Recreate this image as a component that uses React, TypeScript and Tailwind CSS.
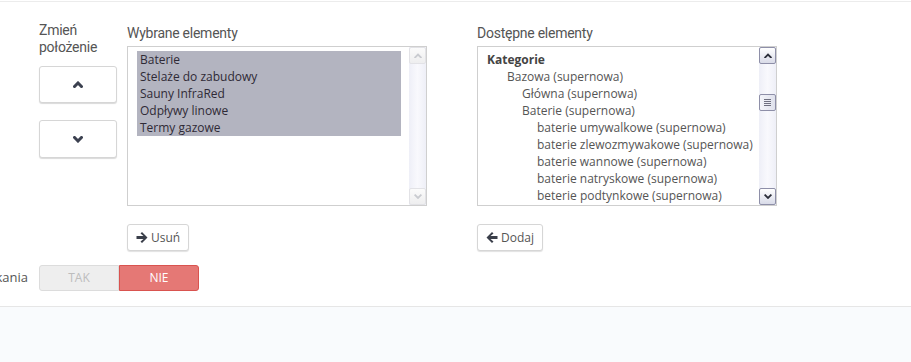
import React from "react";

const condensed = {
  fontFamily: 'Roboto, "Noto Sans", sans-serif',
  letterSpacing: "-0.25px",
};

const Chevron = ({ dir, color, size = 10, width = 3 }: { dir: "up" | "down"; color: string; size?: number; width?: number }) => (
  <svg width={size} height={size * 0.7} viewBox="0 0 10 7">
    <polyline
      points={dir === "up" ? "1.5,5.5 5,2 8.5,5.5" : "1.5,1.5 5,5 8.5,1.5"}
      fill="none"
      stroke={color}
      strokeWidth={width}
      strokeLinecap="square"
    />
  </svg>
);

const ArrowIcon = ({ dir }: { dir: "left" | "right" }) => (
  <svg width="12" height="11" viewBox="0 0 12 11" className={dir === "left" ? "-scale-x-100" : ""}>
    <path d="M0.5 4h7l-3-2.5 1.5-1.5 5.5 5.5-5.5 5.5-1.5-1.5 3-2.5h-7z" fill="#3a3f4a" />
  </svg>
);

const ScrollButton = ({ dir, enabled }: { dir: "up" | "down"; enabled: boolean }) => (
  <div
    className={
      "h-[17px] w-[17px] rounded-[2px] border flex items-center justify-center " +
      (enabled
        ? "border-[#8e8fa8] bg-gradient-to-b from-[#ffffff] to-[#d9dbe8]"
        : "border-[#e2e2e6] bg-gradient-to-b from-[#fbfbfb] to-[#eeeeef]")
    }
  >
    <Chevron dir={dir} color={enabled ? "#2c2f3a" : "#c9cbd0"} size={8} width={2.2} />
  </div>
);

const Scrollbar = ({ enabled }: { enabled: boolean }) => (
  <div className="w-[17px] flex flex-col bg-gradient-to-r from-[#eeeff7] via-[#f9f9fd] to-[#eeeff7]">
    <ScrollButton dir="up" enabled={enabled} />
    <div className="flex-1 flex flex-col">
      {enabled && (
        <div className="mt-[30px] h-[17px] w-[17px] rounded-[2px] border border-[#8e8fa8] bg-gradient-to-r from-[#f4f5fa] to-[#dfe1ec] flex flex-col items-center justify-center gap-[1px]">
          <div className="h-px w-[7px] bg-[#6f7080]" />
          <div className="h-px w-[7px] bg-[#6f7080]" />
          <div className="h-px w-[7px] bg-[#6f7080]" />
          <div className="h-px w-[7px] bg-[#6f7080]" />
        </div>
      )}
    </div>
    <ScrollButton dir="down" enabled={enabled} />
  </div>
);

const selected = ["Baterie", "Stelaże do zabudowy", "Sauny InfraRed", "Odpływy linowe", "Termy gazowe"];

const available: [string, number, boolean?][] = [
  ["Kategorie", 0, true],
  ["Bazowa (supernowa)", 20],
  ["Główna (supernowa)", 35],
  ["Baterie (supernowa)", 35],
  ["baterie umywalkowe (supernowa)", 50],
  ["baterie zlewozmywakowe (supernowa)", 50],
  ["baterie wannowe (supernowa)", 50],
  ["baterie natryskowe (supernowa)", 50],
  ["beterie podtynkowe (supernowa)", 50],
];

const ActionButton = ({ dir, label }: { dir: "left" | "right"; label: string }) => (
  <button className="h-[27px] px-[8px] flex items-center gap-[3px] rounded-[3px] border border-[#d6d6d6] bg-white text-[12px] text-[#555] shadow-[0_1px_1px_rgba(0,0,0,0.12)]">
    <ArrowIcon dir={dir} />
    {label}
  </button>
);

export default function App() {
  return (
    <div
      className="h-screen flex flex-col bg-white text-[12px] text-[#555]"
      style={{ fontFamily: '"Open Sans", "Noto Sans", sans-serif' }}
    >
      <div className="mt-px border-t border-[#ececec]" />
      <div className="flex pl-[39px] pt-[21px] gap-[10px]">
        <div className="w-[78px] flex flex-col">
          <div className="-mt-px text-[14px] leading-[17px] text-[#555]" style={condensed}>
            Zmień
            <br />
            położenie
          </div>
          <button className="mt-[10px] h-[37px] w-[78px] flex items-center justify-center rounded-[3px] border border-[#d6d6d6] bg-white shadow-[0_1px_1px_rgba(0,0,0,0.15)]">
            <Chevron dir="up" color="#3c4150" />
          </button>
          <button className="mt-[17px] h-[38px] w-[78px] flex items-center justify-center rounded-[3px] border border-[#d6d6d6] bg-white shadow-[0_1px_1px_rgba(0,0,0,0.15)]">
            <Chevron dir="down" color="#3c4150" />
          </button>
        </div>

        <div className="w-[300px] flex flex-col">
          <div className="pt-[2px] h-[23px] text-[14px] leading-[16px]" style={condensed}>
            Wybrane elementy
          </div>
          <div className="h-[160px] border border-[#cfcfcf] flex overflow-hidden">
            <div className="flex-1 pt-[4px] pl-[9px] pr-[8px]">
              <div className="bg-[#b3b4c0]">
                {selected.map((s) => (
                  <div key={s} className="h-[17px] leading-[17px] pl-[3px] text-[#2f2a36]">
                    {s}
                  </div>
                ))}
              </div>
            </div>
            <Scrollbar enabled={false} />
          </div>
          <div className="mt-[18px]">
            <ActionButton dir="right" label="Usuń" />
          </div>
        </div>

        <div className="ml-[40px] w-[300px] flex flex-col">
          <div className="pt-[2px] h-[23px] text-[14px] leading-[16px]" style={condensed}>
            Dostępne elementy
          </div>
          <div className="h-[160px] border border-[#cfcfcf] flex overflow-hidden">
            <div className="flex-1 pt-[4px] pl-[9px] overflow-hidden">
              {available.map(([t, indent, bold]) => (
                <div
                  key={t}
                  className={"h-[17px] leading-[17px] whitespace-nowrap " + (bold ? "font-bold text-[#444]" : "text-[#555]")}
                  style={{ paddingLeft: indent }}
                >
                  {t}
                </div>
              ))}
            </div>
            <Scrollbar enabled={true} />
          </div>
          <div className="mt-[18px]">
            <ActionButton dir="left" label="Dodaj" />
          </div>
        </div>
      </div>

      <div className="mt-[14px] flex items-center gap-[11px]">
        <div className="w-[28px] overflow-hidden flex justify-end">
          <span className="whitespace-nowrap text-[13px] text-[#555]">Dostępne do wyszukania</span>
        </div>
        <div className="flex">
          <div className="h-[26px] w-[80px] flex items-center justify-center rounded-l-[3px] border border-[#dcdcdc] bg-[#eeeeee] text-[12px] text-[#bdbdbd]">
            TAK
          </div>
          <div className="h-[26px] w-[80px] flex items-center justify-center rounded-r-[3px] border border-[#d9534f] bg-[#e57875] text-[12px] text-white">
            NIE
          </div>
        </div>
      </div>

      <div className="mt-[15px] flex-1 border-t border-[#e6e6e6] bg-[#f9fbfd]" />
    </div>
  );
}
